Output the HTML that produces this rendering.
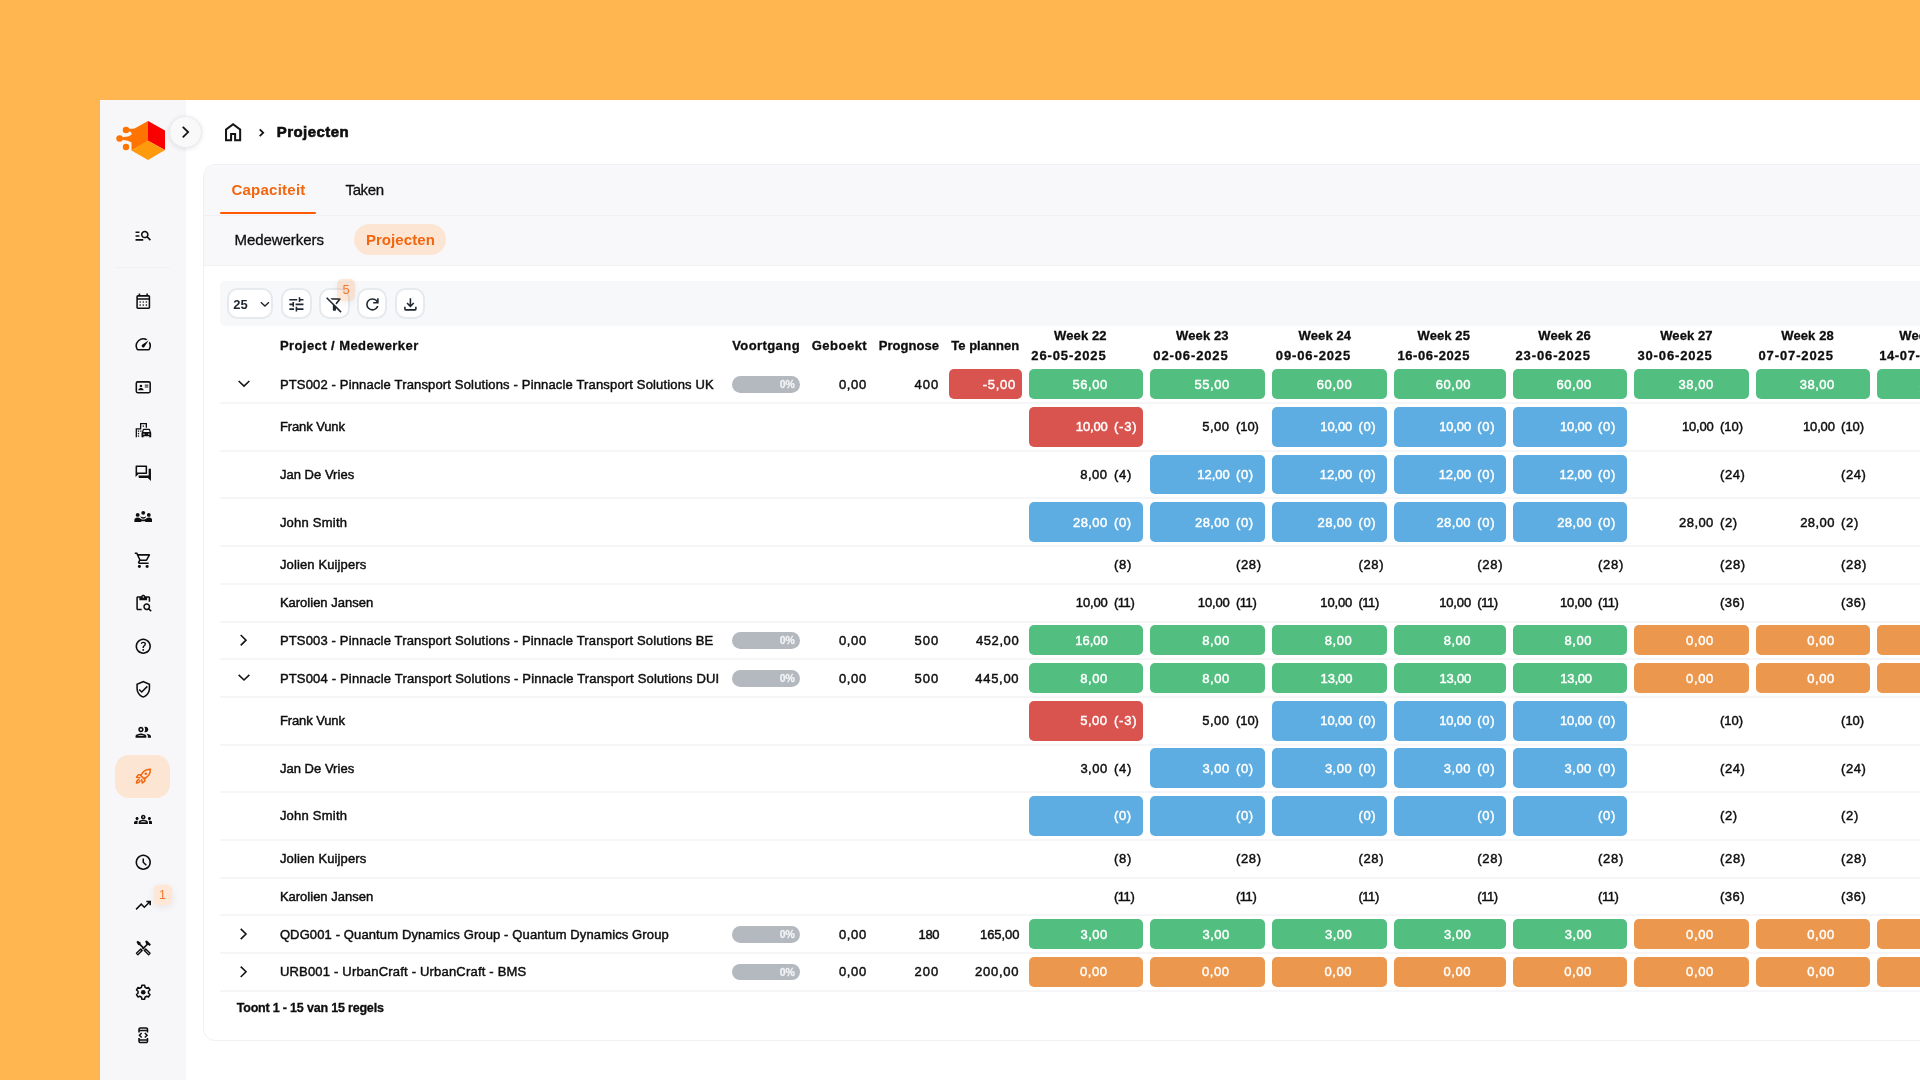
<!DOCTYPE html>
<html><head><meta charset="utf-8"><title>Projecten</title>
<style>
html,body{margin:0;padding:0;overflow:hidden}
body{width:1920px;height:1080px;overflow:hidden;background:#FFB550;position:relative;font-family:"Liberation Sans", sans-serif;}
#root{position:absolute;left:0;top:0;width:1920px;height:1080px;overflow:hidden;will-change:transform}
.b{position:absolute;display:block}
.t{position:absolute;white-space:pre;line-height:20px;height:20px;font-family:"Liberation Sans", sans-serif;-webkit-text-stroke:0.3px currentColor;}
</style></head><body>
<div id="root"><div class="b" style="left:100.00px;top:100.00px;width:1820.00px;height:980.00px;background:#FFFFFF;border-radius:0px;"></div>
<div class="b" style="left:100.00px;top:100.00px;width:86.00px;height:980.00px;background:#F7F7FA;border-radius:0px;"></div>
<div class="b" style="left:203px;top:163.5px;width:1760px;height:877px;background:#fff;border:1px solid #F0F1F3;border-radius:12px;box-sizing:border-box;overflow:hidden"><div style="position:absolute;left:0;top:0;width:100%;height:100.5px;background:#F8F8FA"></div><div style="position:absolute;left:0;top:50px;width:100%;height:1px;background:#F0F1F3"></div><div style="position:absolute;left:0;top:100.5px;width:100%;height:1px;background:#F1F2F4"></div></div>
<svg class="b" style="left:114px;top:119px" width="54" height="44" viewBox="114 119 54 44">
<polygon points="148,121 165,130.5 165,150 147.6,140.6" fill="#FB0000"/>
<path d="M148 121 L148 141 L131.5 150.5 L131.5 142.6 Q128 139.7 122.5 140 L122.5 137 Q128 137.4 131.5 134.8 L131.5 132.8 Q130.4 131.3 128.6 131.5 L128.8 128.5 Q131.5 129 134.6 128.4 Z" fill="#FF7300"/>
<polygon points="147.6,140.6 165,150 148,160 131.5,150.5" fill="#FF9A0C"/>
<circle cx="126" cy="130" r="3.25" fill="#FF7300"/><circle cx="119.6" cy="138.5" r="3.3" fill="#FF7300"/><circle cx="126" cy="147" r="3.2" fill="#FF7300"/>
</svg>
<div class="b" style="left:169px;top:115.8px;width:32.5px;height:32.5px;border-radius:50%;background:#F9F9F9;box-sizing:border-box;border:1px solid #ECECEC;box-shadow:0 1px 5px rgba(0,0,0,.10)"></div>
<svg class="b" style="left:0;top:0" width="1920" height="1080"><path d="M182.76 126.92L188.13 132.10L182.76 137.28" fill="none" stroke="#151515" stroke-width="1.8" stroke-linecap="butt" stroke-linejoin="miter"/></svg>
<svg class="b" style="left:220.80px;top:120.20px;" width="24.2" height="24.2" viewBox="0 0 24 24" fill="#151515" color="#151515" stroke="none"><path transform="translate(0,24) scale(0.025)" d="M240-200h120v-240h240v240h120v-360L480-740 240-560v360Zm-80 80v-480l320-240 320 240v480H520v-240h-80v240H160Zm320-350Z"/></svg>
<svg class="b" style="left:0;top:0" width="1920" height="1080"><path d="M259.71 129.42L263.18 132.80L259.71 136.18" fill="none" stroke="#151515" stroke-width="1.8" stroke-linecap="butt" stroke-linejoin="miter"/></svg>
<span class="t" style="left:276.70px;top:122px;font-size:15px;font-weight:700;color:#0E0E0E;letter-spacing:0.460px;-webkit-text-stroke-width:0.6px;">Projecten</span>
<span class="t" style="left:231.40px;top:180px;font-size:15px;font-weight:700;color:#F2660F;letter-spacing:0.250px;-webkit-text-stroke:0;">Capaciteit</span>
<span class="t" style="left:345.60px;top:180px;font-size:15px;font-weight:400;color:#0E0E0E;letter-spacing:-0.406px;-webkit-text-stroke-width:0.45px;-webkit-text-stroke-width:0.3px;">Taken</span>
<div class="b" style="left:220.00px;top:212.00px;width:96.20px;height:2.20px;background:#FF5A00;border-radius:1px;"></div>
<span class="t" style="left:234.50px;top:230px;font-size:15px;font-weight:400;color:#0E0E0E;letter-spacing:-0.057px;-webkit-text-stroke-width:0.45px;-webkit-text-stroke-width:0.3px;">Medewerkers</span>
<div class="b" style="left:354.40px;top:224.00px;width:91.40px;height:31.20px;background:#FDE5D4;border-radius:16px;"></div>
<span class="t" style="left:365.90px;top:230px;font-size:15px;font-weight:700;color:#F2660F;letter-spacing:0.071px;-webkit-text-stroke:0;">Projecten</span>
<div class="b" style="left:220.30px;top:281.40px;width:1739.70px;height:44.80px;background:#F7F8FA;border-radius:5px;"></div>
<div class="b" style="left:227.4px;top:288.3px;width:46.10000000000001px;height:31px;background:#fff;border:2px solid #E6E9ED;border-radius:10.5px;box-sizing:border-box"></div>
<div class="b" style="left:281.3px;top:288.3px;width:30.600000000000012px;height:31px;background:#fff;border:2px solid #E6E9ED;border-radius:10.5px;box-sizing:border-box"></div>
<div class="b" style="left:319.0px;top:288.3px;width:30.600000000000012px;height:31px;background:#fff;border:2px solid #E6E9ED;border-radius:10.5px;box-sizing:border-box"></div>
<div class="b" style="left:356.90000000000003px;top:288.3px;width:30.600000000000012px;height:31px;background:#fff;border:2px solid #E6E9ED;border-radius:10.5px;box-sizing:border-box"></div>
<div class="b" style="left:394.70000000000005px;top:288.3px;width:30.600000000000012px;height:31px;background:#fff;border:2px solid #E6E9ED;border-radius:10.5px;box-sizing:border-box"></div>
<span class="t" style="left:233.20px;top:295px;font-size:13px;font-weight:700;color:#1E2630;letter-spacing:0.166px;-webkit-text-stroke:0;">25</span>
<svg class="b" style="left:0;top:0" width="1920" height="1080"><path d="M260.86 302.23L264.90 305.93L268.94 302.23" fill="none" stroke="#1E2630" stroke-width="1.4" stroke-linecap="butt" stroke-linejoin="miter"/></svg>
<svg class="b" style="left:287.40px;top:294.70px;" width="18.8" height="18.8" viewBox="0 0 24 24" fill="#1E2630" color="#1E2630" stroke="none"><path transform="translate(0,24) scale(0.025)" d="M440-120v-240h80v80h320v80H520v80h-80Zm-320-80v-80h240v80H120Zm160-160v-80H120v-80h160v-80h80v240h-80Zm160-80v-80h400v80H440Zm160-160v-240h80v80h160v80H680v80h-80Zm-480-80v-80h400v80H120Z"/></svg>
<svg class="b" style="left:324.90px;top:294.90px;" width="18.8" height="18.8" viewBox="0 0 24 24" fill="#1E2630" color="#1E2630" stroke="none"><path transform="translate(0,24) scale(0.025)" d="m592-481-57-57 143-182H353l-80-80h487q25 0 36 22t-4 42L592-481ZM791-56 560-287v87q0 17-11.500 28.500T520-160h-80q-17 0-28.500-11.500T400-200v-247L56-791l56-57 736 736-57 56Z"/></svg>
<svg class="b" style="left:363.20px;top:294.50px;" width="18.8" height="18.8" viewBox="0 0 24 24" fill="#1E2630" color="#1E2630" stroke="none"><path transform="translate(0,24) scale(0.025)" d="M480-160q-134 0-227-93t-93-227q0-134 93-227t227-93q69 0 132 28.5T720-690v-110h80v280H520v-80h168q-32-56-87.5-88T480-720q-100 0-170 70t-70 170q0 100 70 170t170 70q77 0 139-44t87-116h84q-28 106-114 173t-196 67Z"/></svg>
<svg class="b" style="left:400.80px;top:294.70px;" width="18.8" height="18.8" viewBox="0 0 24 24" fill="#1E2630" color="#1E2630" stroke="none"><path transform="translate(0,24) scale(0.025)" d="M480-320 280-520l56-58 104 104v-326h80v326l104-104 56 58-200 200ZM240-160q-33 0-56.500-23.500T160-240v-120h80v120h480v-120h80v120q0 33-23.500 56.500T720-160H240Z"/></svg>
<div class="b" style="left:337.20px;top:279.00px;width:18.20px;height:21.50px;background:rgba(246,125,40,0.19);border-radius:5px;box-shadow:0 2px 6px rgba(0,0,0,.06)"></div>
<span class="t" style="left:342.58px;top:280px;font-size:13px;font-weight:400;color:#F07A30;-webkit-text-stroke-width:0.45px;-webkit-text-stroke:0;">5</span>
<span class="t" style="left:279.90px;top:336px;font-size:13px;font-weight:700;color:#0E0E0E;letter-spacing:0.437px;">Project / Medewerker</span>
<span class="t" style="left:732.20px;top:336px;font-size:13px;font-weight:700;color:#0E0E0E;letter-spacing:0.419px;">Voortgang</span>
<span class="t" style="left:811.70px;top:336px;font-size:13px;font-weight:700;color:#0E0E0E;letter-spacing:0.498px;">Geboekt</span>
<span class="t" style="left:878.70px;top:336px;font-size:13px;font-weight:700;color:#0E0E0E;letter-spacing:0.041px;">Prognose</span>
<span class="t" style="left:951.20px;top:336px;font-size:13px;font-weight:700;color:#0E0E0E;letter-spacing:0.044px;">Te plannen</span>
<span class="t" style="left:1054.10px;top:326px;font-size:13px;font-weight:700;color:#0E0E0E;letter-spacing:0.100px;">Week 22</span>
<span class="t" style="left:1031.30px;top:346px;font-size:13px;font-weight:700;color:#0E0E0E;letter-spacing:0.880px;">26-05-2025</span>
<span class="t" style="left:1176.10px;top:326px;font-size:13px;font-weight:700;color:#0E0E0E;letter-spacing:0.100px;">Week 23</span>
<span class="t" style="left:1153.30px;top:346px;font-size:13px;font-weight:700;color:#0E0E0E;letter-spacing:0.880px;">02-06-2025</span>
<span class="t" style="left:1298.60px;top:326px;font-size:13px;font-weight:700;color:#0E0E0E;letter-spacing:0.100px;">Week 24</span>
<span class="t" style="left:1275.80px;top:346px;font-size:13px;font-weight:700;color:#0E0E0E;letter-spacing:0.880px;">09-06-2025</span>
<span class="t" style="left:1417.50px;top:326px;font-size:13px;font-weight:700;color:#0E0E0E;letter-spacing:0.100px;">Week 25</span>
<span class="t" style="left:1397.40px;top:346px;font-size:13px;font-weight:700;color:#0E0E0E;letter-spacing:0.610px;">16-06-2025</span>
<span class="t" style="left:1538.30px;top:326px;font-size:13px;font-weight:700;color:#0E0E0E;letter-spacing:0.100px;">Week 26</span>
<span class="t" style="left:1515.50px;top:346px;font-size:13px;font-weight:700;color:#0E0E0E;letter-spacing:0.880px;">23-06-2025</span>
<span class="t" style="left:1660.20px;top:326px;font-size:13px;font-weight:700;color:#0E0E0E;letter-spacing:0.100px;">Week 27</span>
<span class="t" style="left:1637.40px;top:346px;font-size:13px;font-weight:700;color:#0E0E0E;letter-spacing:0.880px;">30-06-2025</span>
<span class="t" style="left:1781.30px;top:326px;font-size:13px;font-weight:700;color:#0E0E0E;letter-spacing:0.100px;">Week 28</span>
<span class="t" style="left:1758.50px;top:346px;font-size:13px;font-weight:700;color:#0E0E0E;letter-spacing:0.880px;">07-07-2025</span>
<span class="t" style="left:1899.30px;top:326px;font-size:13px;font-weight:700;color:#0E0E0E;letter-spacing:0.100px;">Week 29</span>
<span class="t" style="left:1879.20px;top:346px;font-size:13px;font-weight:700;color:#0E0E0E;letter-spacing:0.610px;">14-07-2025</span>
<svg class="b" style="left:0;top:0" width="1920" height="1080"><path d="M238.64 381.02L244.00 386.11L249.36 381.02" fill="none" stroke="#151515" stroke-width="1.6" stroke-linecap="butt" stroke-linejoin="miter"/></svg>
<span class="t" style="left:279.90px;top:375px;font-size:13px;font-weight:400;color:#0E0E0E;letter-spacing:0.159px;-webkit-text-stroke-width:0.45px;">PTS002 - Pinnacle Transport Solutions - Pinnacle Transport Solutions UK</span>
<div class="b" style="left:731.60px;top:375.90px;width:68.90px;height:16.80px;background:#B4B9C0;border-radius:9px;"></div>
<span class="t" style="left:779.80px;top:374px;font-size:10.5px;font-weight:700;color:#F1F2F4;letter-spacing:-0.094px;">0%</span>
<span class="t" style="left:839.00px;top:375px;font-size:13px;font-weight:400;color:#0E0E0E;letter-spacing:0.622px;-webkit-text-stroke-width:0.45px;">0,00</span>
<span class="t" style="left:914.60px;top:375px;font-size:13px;font-weight:400;color:#0E0E0E;letter-spacing:0.966px;-webkit-text-stroke-width:0.45px;">400</span>
<div class="b" style="left:948.90px;top:369.20px;width:73.10px;height:30.00px;background:#D9534F;border-radius:5px;"></div>
<span class="t" style="left:982.80px;top:375px;font-size:13px;font-weight:400;color:#fff;letter-spacing:0.672px;-webkit-text-stroke-width:0.45px;">-5,00</span>
<div class="b" style="left:1028.80px;top:369.20px;width:114.00px;height:30.00px;background:#52BE80;border-radius:5px;"></div>
<span class="t" style="left:1072.50px;top:375px;font-size:13px;font-weight:400;color:#fff;letter-spacing:0.531px;-webkit-text-stroke-width:0.45px;">56,00</span>
<div class="b" style="left:1149.70px;top:369.20px;width:115.10px;height:30.00px;background:#52BE80;border-radius:5px;"></div>
<span class="t" style="left:1194.50px;top:375px;font-size:13px;font-weight:400;color:#fff;letter-spacing:0.531px;-webkit-text-stroke-width:0.45px;">55,00</span>
<div class="b" style="left:1271.90px;top:369.20px;width:115.40px;height:30.00px;background:#52BE80;border-radius:5px;"></div>
<span class="t" style="left:1316.80px;top:375px;font-size:13px;font-weight:400;color:#fff;letter-spacing:0.571px;-webkit-text-stroke-width:0.45px;">60,00</span>
<div class="b" style="left:1394.30px;top:369.20px;width:111.90px;height:30.00px;background:#52BE80;border-radius:5px;"></div>
<span class="t" style="left:1435.70px;top:375px;font-size:13px;font-weight:400;color:#fff;letter-spacing:0.571px;-webkit-text-stroke-width:0.45px;">60,00</span>
<div class="b" style="left:1513.10px;top:369.20px;width:113.90px;height:30.00px;background:#52BE80;border-radius:5px;"></div>
<span class="t" style="left:1556.50px;top:375px;font-size:13px;font-weight:400;color:#fff;letter-spacing:0.571px;-webkit-text-stroke-width:0.45px;">60,00</span>
<div class="b" style="left:1634.00px;top:369.20px;width:114.90px;height:30.00px;background:#52BE80;border-radius:5px;"></div>
<span class="t" style="left:1678.60px;top:375px;font-size:13px;font-weight:400;color:#fff;letter-spacing:0.531px;-webkit-text-stroke-width:0.45px;">38,00</span>
<div class="b" style="left:1756.10px;top:369.20px;width:113.90px;height:30.00px;background:#52BE80;border-radius:5px;"></div>
<span class="t" style="left:1799.70px;top:375px;font-size:13px;font-weight:400;color:#fff;letter-spacing:0.531px;-webkit-text-stroke-width:0.45px;">38,00</span>
<div class="b" style="left:1876.90px;top:369.20px;width:111.10px;height:30.00px;background:#52BE80;border-radius:5px;"></div>
<span class="t" style="left:1919.50px;top:375px;font-size:13px;font-weight:400;color:#fff;letter-spacing:0.531px;-webkit-text-stroke-width:0.45px;">38,00</span>
<div class="b" style="left:220.00px;top:402.00px;width:1740.00px;height:2.00px;background:#F6F6F8;border-radius:0px;"></div>
<span class="t" style="left:279.90px;top:417px;font-size:13px;font-weight:400;color:#0E0E0E;letter-spacing:-0.100px;-webkit-text-stroke-width:0.45px;">Frank Vunk</span>
<div class="b" style="left:1028.80px;top:407.00px;width:114.00px;height:39.75px;background:#D9534F;border-radius:5px;"></div>
<span class="t" style="left:1075.80px;top:417px;font-size:13px;font-weight:400;color:#fff;letter-spacing:-0.149px;-webkit-text-stroke-width:0.45px;">10,00</span>
<span class="t" style="left:1113.90px;top:417px;font-size:13px;font-weight:400;color:#fff;letter-spacing:0.845px;-webkit-text-stroke-width:0.45px;">(-3)</span>
<span class="t" style="left:1202.20px;top:417px;font-size:13px;font-weight:400;color:#0E0E0E;letter-spacing:0.522px;-webkit-text-stroke-width:0.45px;">5,00</span>
<span class="t" style="left:1235.90px;top:417px;font-size:13px;font-weight:400;color:#0E0E0E;letter-spacing:-0.031px;-webkit-text-stroke-width:0.45px;">(10)</span>
<div class="b" style="left:1271.90px;top:407.00px;width:115.40px;height:39.75px;background:#5DADE2;border-radius:5px;"></div>
<span class="t" style="left:1320.30px;top:417px;font-size:13px;font-weight:400;color:#fff;letter-spacing:-0.149px;-webkit-text-stroke-width:0.45px;">10,00</span>
<span class="t" style="left:1358.40px;top:417px;font-size:13px;font-weight:400;color:#fff;letter-spacing:0.670px;-webkit-text-stroke-width:0.45px;">(0)</span>
<div class="b" style="left:1394.30px;top:407.00px;width:111.90px;height:39.75px;background:#5DADE2;border-radius:5px;"></div>
<span class="t" style="left:1439.20px;top:417px;font-size:13px;font-weight:400;color:#fff;letter-spacing:-0.149px;-webkit-text-stroke-width:0.45px;">10,00</span>
<span class="t" style="left:1477.30px;top:417px;font-size:13px;font-weight:400;color:#fff;letter-spacing:0.670px;-webkit-text-stroke-width:0.45px;">(0)</span>
<div class="b" style="left:1513.10px;top:407.00px;width:113.90px;height:39.75px;background:#5DADE2;border-radius:5px;"></div>
<span class="t" style="left:1560.00px;top:417px;font-size:13px;font-weight:400;color:#fff;letter-spacing:-0.149px;-webkit-text-stroke-width:0.45px;">10,00</span>
<span class="t" style="left:1598.10px;top:417px;font-size:13px;font-weight:400;color:#fff;letter-spacing:0.670px;-webkit-text-stroke-width:0.45px;">(0)</span>
<span class="t" style="left:1681.90px;top:417px;font-size:13px;font-weight:400;color:#0E0E0E;letter-spacing:-0.149px;-webkit-text-stroke-width:0.45px;">10,00</span>
<span class="t" style="left:1720.00px;top:417px;font-size:13px;font-weight:400;color:#0E0E0E;letter-spacing:-0.031px;-webkit-text-stroke-width:0.45px;">(10)</span>
<span class="t" style="left:1803.00px;top:417px;font-size:13px;font-weight:400;color:#0E0E0E;letter-spacing:-0.149px;-webkit-text-stroke-width:0.45px;">10,00</span>
<span class="t" style="left:1841.10px;top:417px;font-size:13px;font-weight:400;color:#0E0E0E;letter-spacing:-0.031px;-webkit-text-stroke-width:0.45px;">(10)</span>
<span class="t" style="left:1922.80px;top:417px;font-size:13px;font-weight:400;color:#0E0E0E;letter-spacing:-0.149px;-webkit-text-stroke-width:0.45px;">10,00</span>
<span class="t" style="left:1959.10px;top:417px;font-size:13px;font-weight:400;color:#0E0E0E;letter-spacing:-0.031px;-webkit-text-stroke-width:0.45px;">(10)</span>
<div class="b" style="left:220.00px;top:450.00px;width:1740.00px;height:2.00px;background:#F6F6F8;border-radius:0px;"></div>
<span class="t" style="left:279.90px;top:465px;font-size:13px;font-weight:400;color:#0E0E0E;letter-spacing:0.030px;-webkit-text-stroke-width:0.45px;">Jan De Vries</span>
<span class="t" style="left:1080.20px;top:465px;font-size:13px;font-weight:400;color:#0E0E0E;letter-spacing:0.522px;-webkit-text-stroke-width:0.45px;">8,00</span>
<span class="t" style="left:1113.90px;top:465px;font-size:13px;font-weight:400;color:#0E0E0E;letter-spacing:0.803px;-webkit-text-stroke-width:0.45px;">(4)</span>
<div class="b" style="left:1149.70px;top:454.55px;width:115.10px;height:39.75px;background:#5DADE2;border-radius:5px;"></div>
<span class="t" style="left:1197.30px;top:465px;font-size:13px;font-weight:400;color:#fff;letter-spacing:-0.049px;-webkit-text-stroke-width:0.45px;">12,00</span>
<span class="t" style="left:1235.90px;top:465px;font-size:13px;font-weight:400;color:#fff;letter-spacing:0.670px;-webkit-text-stroke-width:0.45px;">(0)</span>
<div class="b" style="left:1271.90px;top:454.55px;width:115.40px;height:39.75px;background:#5DADE2;border-radius:5px;"></div>
<span class="t" style="left:1319.80px;top:465px;font-size:13px;font-weight:400;color:#fff;letter-spacing:-0.049px;-webkit-text-stroke-width:0.45px;">12,00</span>
<span class="t" style="left:1358.40px;top:465px;font-size:13px;font-weight:400;color:#fff;letter-spacing:0.670px;-webkit-text-stroke-width:0.45px;">(0)</span>
<div class="b" style="left:1394.30px;top:454.55px;width:111.90px;height:39.75px;background:#5DADE2;border-radius:5px;"></div>
<span class="t" style="left:1438.70px;top:465px;font-size:13px;font-weight:400;color:#fff;letter-spacing:-0.049px;-webkit-text-stroke-width:0.45px;">12,00</span>
<span class="t" style="left:1477.30px;top:465px;font-size:13px;font-weight:400;color:#fff;letter-spacing:0.670px;-webkit-text-stroke-width:0.45px;">(0)</span>
<div class="b" style="left:1513.10px;top:454.55px;width:113.90px;height:39.75px;background:#5DADE2;border-radius:5px;"></div>
<span class="t" style="left:1559.50px;top:465px;font-size:13px;font-weight:400;color:#fff;letter-spacing:-0.049px;-webkit-text-stroke-width:0.45px;">12,00</span>
<span class="t" style="left:1598.10px;top:465px;font-size:13px;font-weight:400;color:#fff;letter-spacing:0.670px;-webkit-text-stroke-width:0.45px;">(0)</span>
<span class="t" style="left:1720.00px;top:465px;font-size:13px;font-weight:400;color:#0E0E0E;letter-spacing:0.569px;-webkit-text-stroke-width:0.45px;">(24)</span>
<span class="t" style="left:1841.10px;top:465px;font-size:13px;font-weight:400;color:#0E0E0E;letter-spacing:0.569px;-webkit-text-stroke-width:0.45px;">(24)</span>
<span class="t" style="left:1959.10px;top:465px;font-size:13px;font-weight:400;color:#0E0E0E;letter-spacing:0.569px;-webkit-text-stroke-width:0.45px;">(24)</span>
<div class="b" style="left:220.00px;top:497.00px;width:1740.00px;height:2.00px;background:#F6F6F8;border-radius:0px;"></div>
<span class="t" style="left:279.90px;top:513px;font-size:13px;font-weight:400;color:#0E0E0E;letter-spacing:0.225px;-webkit-text-stroke-width:0.45px;">John Smith</span>
<div class="b" style="left:1028.80px;top:502.10px;width:114.00px;height:39.75px;background:#5DADE2;border-radius:5px;"></div>
<span class="t" style="left:1073.00px;top:513px;font-size:13px;font-weight:400;color:#fff;letter-spacing:0.411px;-webkit-text-stroke-width:0.45px;">28,00</span>
<span class="t" style="left:1113.90px;top:513px;font-size:13px;font-weight:400;color:#fff;letter-spacing:0.670px;-webkit-text-stroke-width:0.45px;">(0)</span>
<div class="b" style="left:1149.70px;top:502.10px;width:115.10px;height:39.75px;background:#5DADE2;border-radius:5px;"></div>
<span class="t" style="left:1195.00px;top:513px;font-size:13px;font-weight:400;color:#fff;letter-spacing:0.411px;-webkit-text-stroke-width:0.45px;">28,00</span>
<span class="t" style="left:1235.90px;top:513px;font-size:13px;font-weight:400;color:#fff;letter-spacing:0.670px;-webkit-text-stroke-width:0.45px;">(0)</span>
<div class="b" style="left:1271.90px;top:502.10px;width:115.40px;height:39.75px;background:#5DADE2;border-radius:5px;"></div>
<span class="t" style="left:1317.50px;top:513px;font-size:13px;font-weight:400;color:#fff;letter-spacing:0.411px;-webkit-text-stroke-width:0.45px;">28,00</span>
<span class="t" style="left:1358.40px;top:513px;font-size:13px;font-weight:400;color:#fff;letter-spacing:0.670px;-webkit-text-stroke-width:0.45px;">(0)</span>
<div class="b" style="left:1394.30px;top:502.10px;width:111.90px;height:39.75px;background:#5DADE2;border-radius:5px;"></div>
<span class="t" style="left:1436.40px;top:513px;font-size:13px;font-weight:400;color:#fff;letter-spacing:0.411px;-webkit-text-stroke-width:0.45px;">28,00</span>
<span class="t" style="left:1477.30px;top:513px;font-size:13px;font-weight:400;color:#fff;letter-spacing:0.670px;-webkit-text-stroke-width:0.45px;">(0)</span>
<div class="b" style="left:1513.10px;top:502.10px;width:113.90px;height:39.75px;background:#5DADE2;border-radius:5px;"></div>
<span class="t" style="left:1557.20px;top:513px;font-size:13px;font-weight:400;color:#fff;letter-spacing:0.411px;-webkit-text-stroke-width:0.45px;">28,00</span>
<span class="t" style="left:1598.10px;top:513px;font-size:13px;font-weight:400;color:#fff;letter-spacing:0.670px;-webkit-text-stroke-width:0.45px;">(0)</span>
<span class="t" style="left:1679.10px;top:513px;font-size:13px;font-weight:400;color:#0E0E0E;letter-spacing:0.411px;-webkit-text-stroke-width:0.45px;">28,00</span>
<span class="t" style="left:1720.00px;top:513px;font-size:13px;font-weight:400;color:#0E0E0E;letter-spacing:0.636px;-webkit-text-stroke-width:0.45px;">(2)</span>
<span class="t" style="left:1800.20px;top:513px;font-size:13px;font-weight:400;color:#0E0E0E;letter-spacing:0.411px;-webkit-text-stroke-width:0.45px;">28,00</span>
<span class="t" style="left:1841.10px;top:513px;font-size:13px;font-weight:400;color:#0E0E0E;letter-spacing:0.636px;-webkit-text-stroke-width:0.45px;">(2)</span>
<span class="t" style="left:1920.00px;top:513px;font-size:13px;font-weight:400;color:#0E0E0E;letter-spacing:0.411px;-webkit-text-stroke-width:0.45px;">28,00</span>
<span class="t" style="left:1959.10px;top:513px;font-size:13px;font-weight:400;color:#0E0E0E;letter-spacing:0.636px;-webkit-text-stroke-width:0.45px;">(2)</span>
<div class="b" style="left:220.00px;top:545.00px;width:1740.00px;height:2.00px;background:#F6F6F8;border-radius:0px;"></div>
<span class="t" style="left:279.90px;top:555px;font-size:13px;font-weight:400;color:#0E0E0E;letter-spacing:0.130px;-webkit-text-stroke-width:0.45px;">Jolien Kuijpers</span>
<span class="t" style="left:1113.90px;top:555px;font-size:13px;font-weight:400;color:#0E0E0E;letter-spacing:0.803px;-webkit-text-stroke-width:0.45px;">(8)</span>
<span class="t" style="left:1235.90px;top:555px;font-size:13px;font-weight:400;color:#0E0E0E;letter-spacing:0.694px;-webkit-text-stroke-width:0.45px;">(28)</span>
<span class="t" style="left:1358.40px;top:555px;font-size:13px;font-weight:400;color:#0E0E0E;letter-spacing:0.694px;-webkit-text-stroke-width:0.45px;">(28)</span>
<span class="t" style="left:1477.30px;top:555px;font-size:13px;font-weight:400;color:#0E0E0E;letter-spacing:0.694px;-webkit-text-stroke-width:0.45px;">(28)</span>
<span class="t" style="left:1598.10px;top:555px;font-size:13px;font-weight:400;color:#0E0E0E;letter-spacing:0.694px;-webkit-text-stroke-width:0.45px;">(28)</span>
<span class="t" style="left:1720.00px;top:555px;font-size:13px;font-weight:400;color:#0E0E0E;letter-spacing:0.694px;-webkit-text-stroke-width:0.45px;">(28)</span>
<span class="t" style="left:1841.10px;top:555px;font-size:13px;font-weight:400;color:#0E0E0E;letter-spacing:0.694px;-webkit-text-stroke-width:0.45px;">(28)</span>
<span class="t" style="left:1959.10px;top:555px;font-size:13px;font-weight:400;color:#0E0E0E;letter-spacing:0.694px;-webkit-text-stroke-width:0.45px;">(28)</span>
<div class="b" style="left:220.00px;top:583.00px;width:1740.00px;height:2.00px;background:#F6F6F8;border-radius:0px;"></div>
<span class="t" style="left:279.90px;top:593px;font-size:13px;font-weight:400;color:#0E0E0E;-webkit-text-stroke-width:0.45px;">Karolien Jansen</span>
<span class="t" style="left:1075.80px;top:593px;font-size:13px;font-weight:400;color:#0E0E0E;letter-spacing:-0.149px;-webkit-text-stroke-width:0.45px;">10,00</span>
<span class="t" style="left:1113.90px;top:593px;font-size:13px;font-weight:400;color:#0E0E0E;letter-spacing:-0.439px;-webkit-text-stroke-width:0.45px;">(11)</span>
<span class="t" style="left:1197.80px;top:593px;font-size:13px;font-weight:400;color:#0E0E0E;letter-spacing:-0.149px;-webkit-text-stroke-width:0.45px;">10,00</span>
<span class="t" style="left:1235.90px;top:593px;font-size:13px;font-weight:400;color:#0E0E0E;letter-spacing:-0.439px;-webkit-text-stroke-width:0.45px;">(11)</span>
<span class="t" style="left:1320.30px;top:593px;font-size:13px;font-weight:400;color:#0E0E0E;letter-spacing:-0.149px;-webkit-text-stroke-width:0.45px;">10,00</span>
<span class="t" style="left:1358.40px;top:593px;font-size:13px;font-weight:400;color:#0E0E0E;letter-spacing:-0.439px;-webkit-text-stroke-width:0.45px;">(11)</span>
<span class="t" style="left:1439.20px;top:593px;font-size:13px;font-weight:400;color:#0E0E0E;letter-spacing:-0.149px;-webkit-text-stroke-width:0.45px;">10,00</span>
<span class="t" style="left:1477.30px;top:593px;font-size:13px;font-weight:400;color:#0E0E0E;letter-spacing:-0.439px;-webkit-text-stroke-width:0.45px;">(11)</span>
<span class="t" style="left:1560.00px;top:593px;font-size:13px;font-weight:400;color:#0E0E0E;letter-spacing:-0.149px;-webkit-text-stroke-width:0.45px;">10,00</span>
<span class="t" style="left:1598.10px;top:593px;font-size:13px;font-weight:400;color:#0E0E0E;letter-spacing:-0.439px;-webkit-text-stroke-width:0.45px;">(11)</span>
<span class="t" style="left:1720.00px;top:593px;font-size:13px;font-weight:400;color:#0E0E0E;letter-spacing:0.519px;-webkit-text-stroke-width:0.45px;">(36)</span>
<span class="t" style="left:1841.10px;top:593px;font-size:13px;font-weight:400;color:#0E0E0E;letter-spacing:0.519px;-webkit-text-stroke-width:0.45px;">(36)</span>
<span class="t" style="left:1959.10px;top:593px;font-size:13px;font-weight:400;color:#0E0E0E;letter-spacing:0.519px;-webkit-text-stroke-width:0.45px;">(36)</span>
<div class="b" style="left:220.00px;top:621.00px;width:1740.00px;height:2.00px;background:#F6F6F8;border-radius:0px;"></div>
<svg class="b" style="left:0;top:0" width="1920" height="1080"><path d="M240.72 634.99L246.01 640.15L240.72 645.31" fill="none" stroke="#151515" stroke-width="1.6" stroke-linecap="butt" stroke-linejoin="miter"/></svg>
<span class="t" style="left:279.90px;top:631px;font-size:13px;font-weight:400;color:#0E0E0E;letter-spacing:0.162px;-webkit-text-stroke-width:0.45px;">PTS003 - Pinnacle Transport Solutions - Pinnacle Transport Solutions BE</span>
<div class="b" style="left:731.60px;top:631.95px;width:68.90px;height:16.80px;background:#B4B9C0;border-radius:9px;"></div>
<span class="t" style="left:779.80px;top:630px;font-size:10.5px;font-weight:700;color:#F1F2F4;letter-spacing:-0.094px;">0%</span>
<span class="t" style="left:839.00px;top:631px;font-size:13px;font-weight:400;color:#0E0E0E;letter-spacing:0.622px;-webkit-text-stroke-width:0.45px;">0,00</span>
<span class="t" style="left:914.60px;top:631px;font-size:13px;font-weight:400;color:#0E0E0E;letter-spacing:0.966px;-webkit-text-stroke-width:0.45px;">500</span>
<span class="t" style="left:975.90px;top:631px;font-size:13px;font-weight:400;color:#0E0E0E;letter-spacing:0.606px;-webkit-text-stroke-width:0.45px;">452,00</span>
<div class="b" style="left:1028.80px;top:625.25px;width:114.00px;height:30.00px;background:#52BE80;border-radius:5px;"></div>
<span class="t" style="left:1075.30px;top:631px;font-size:13px;font-weight:400;color:#fff;letter-spacing:-0.029px;-webkit-text-stroke-width:0.45px;">16,00</span>
<div class="b" style="left:1149.70px;top:625.25px;width:115.10px;height:30.00px;background:#52BE80;border-radius:5px;"></div>
<span class="t" style="left:1202.30px;top:631px;font-size:13px;font-weight:400;color:#fff;letter-spacing:0.522px;-webkit-text-stroke-width:0.45px;">8,00</span>
<div class="b" style="left:1271.90px;top:625.25px;width:115.40px;height:30.00px;background:#52BE80;border-radius:5px;"></div>
<span class="t" style="left:1324.80px;top:631px;font-size:13px;font-weight:400;color:#fff;letter-spacing:0.522px;-webkit-text-stroke-width:0.45px;">8,00</span>
<div class="b" style="left:1394.30px;top:625.25px;width:111.90px;height:30.00px;background:#52BE80;border-radius:5px;"></div>
<span class="t" style="left:1443.70px;top:631px;font-size:13px;font-weight:400;color:#fff;letter-spacing:0.522px;-webkit-text-stroke-width:0.45px;">8,00</span>
<div class="b" style="left:1513.10px;top:625.25px;width:113.90px;height:30.00px;background:#52BE80;border-radius:5px;"></div>
<span class="t" style="left:1564.50px;top:631px;font-size:13px;font-weight:400;color:#fff;letter-spacing:0.522px;-webkit-text-stroke-width:0.45px;">8,00</span>
<div class="b" style="left:1634.00px;top:625.25px;width:114.90px;height:30.00px;background:#EB984E;border-radius:5px;"></div>
<span class="t" style="left:1686.10px;top:631px;font-size:13px;font-weight:400;color:#fff;letter-spacing:0.597px;-webkit-text-stroke-width:0.45px;">0,00</span>
<div class="b" style="left:1756.10px;top:625.25px;width:113.90px;height:30.00px;background:#EB984E;border-radius:5px;"></div>
<span class="t" style="left:1807.20px;top:631px;font-size:13px;font-weight:400;color:#fff;letter-spacing:0.597px;-webkit-text-stroke-width:0.45px;">0,00</span>
<div class="b" style="left:1876.90px;top:625.25px;width:111.10px;height:30.00px;background:#EB984E;border-radius:5px;"></div>
<span class="t" style="left:1927.00px;top:631px;font-size:13px;font-weight:400;color:#fff;letter-spacing:0.597px;-webkit-text-stroke-width:0.45px;">0,00</span>
<div class="b" style="left:220.00px;top:658.00px;width:1740.00px;height:2.00px;background:#F6F6F8;border-radius:0px;"></div>
<svg class="b" style="left:0;top:0" width="1920" height="1080"><path d="M238.64 674.87L244.00 679.96L249.36 674.87" fill="none" stroke="#151515" stroke-width="1.6" stroke-linecap="butt" stroke-linejoin="miter"/></svg>
<span class="t" style="left:279.90px;top:669px;font-size:13px;font-weight:400;color:#0E0E0E;letter-spacing:0.173px;-webkit-text-stroke-width:0.45px;">PTS004 - Pinnacle Transport Solutions - Pinnacle Transport Solutions DUI</span>
<div class="b" style="left:731.60px;top:669.75px;width:68.90px;height:16.80px;background:#B4B9C0;border-radius:9px;"></div>
<span class="t" style="left:779.80px;top:668px;font-size:10.5px;font-weight:700;color:#F1F2F4;letter-spacing:-0.094px;">0%</span>
<span class="t" style="left:839.00px;top:669px;font-size:13px;font-weight:400;color:#0E0E0E;letter-spacing:0.622px;-webkit-text-stroke-width:0.45px;">0,00</span>
<span class="t" style="left:914.60px;top:669px;font-size:13px;font-weight:400;color:#0E0E0E;letter-spacing:0.966px;-webkit-text-stroke-width:0.45px;">500</span>
<span class="t" style="left:975.30px;top:669px;font-size:13px;font-weight:400;color:#0E0E0E;letter-spacing:0.706px;-webkit-text-stroke-width:0.45px;">445,00</span>
<div class="b" style="left:1028.80px;top:663.05px;width:114.00px;height:30.00px;background:#52BE80;border-radius:5px;"></div>
<span class="t" style="left:1080.30px;top:669px;font-size:13px;font-weight:400;color:#fff;letter-spacing:0.522px;-webkit-text-stroke-width:0.45px;">8,00</span>
<div class="b" style="left:1149.70px;top:663.05px;width:115.10px;height:30.00px;background:#52BE80;border-radius:5px;"></div>
<span class="t" style="left:1202.30px;top:669px;font-size:13px;font-weight:400;color:#fff;letter-spacing:0.522px;-webkit-text-stroke-width:0.45px;">8,00</span>
<div class="b" style="left:1271.90px;top:663.05px;width:115.40px;height:30.00px;background:#52BE80;border-radius:5px;"></div>
<span class="t" style="left:1320.60px;top:669px;font-size:13px;font-weight:400;color:#fff;letter-spacing:-0.189px;-webkit-text-stroke-width:0.45px;">13,00</span>
<div class="b" style="left:1394.30px;top:663.05px;width:111.90px;height:30.00px;background:#52BE80;border-radius:5px;"></div>
<span class="t" style="left:1439.50px;top:669px;font-size:13px;font-weight:400;color:#fff;letter-spacing:-0.189px;-webkit-text-stroke-width:0.45px;">13,00</span>
<div class="b" style="left:1513.10px;top:663.05px;width:113.90px;height:30.00px;background:#52BE80;border-radius:5px;"></div>
<span class="t" style="left:1560.30px;top:669px;font-size:13px;font-weight:400;color:#fff;letter-spacing:-0.189px;-webkit-text-stroke-width:0.45px;">13,00</span>
<div class="b" style="left:1634.00px;top:663.05px;width:114.90px;height:30.00px;background:#EB984E;border-radius:5px;"></div>
<span class="t" style="left:1686.10px;top:669px;font-size:13px;font-weight:400;color:#fff;letter-spacing:0.597px;-webkit-text-stroke-width:0.45px;">0,00</span>
<div class="b" style="left:1756.10px;top:663.05px;width:113.90px;height:30.00px;background:#EB984E;border-radius:5px;"></div>
<span class="t" style="left:1807.20px;top:669px;font-size:13px;font-weight:400;color:#fff;letter-spacing:0.597px;-webkit-text-stroke-width:0.45px;">0,00</span>
<div class="b" style="left:1876.90px;top:663.05px;width:111.10px;height:30.00px;background:#EB984E;border-radius:5px;"></div>
<span class="t" style="left:1927.00px;top:669px;font-size:13px;font-weight:400;color:#fff;letter-spacing:0.597px;-webkit-text-stroke-width:0.45px;">0,00</span>
<div class="b" style="left:220.00px;top:696.00px;width:1740.00px;height:2.00px;background:#F6F6F8;border-radius:0px;"></div>
<span class="t" style="left:279.90px;top:711px;font-size:13px;font-weight:400;color:#0E0E0E;letter-spacing:-0.100px;-webkit-text-stroke-width:0.45px;">Frank Vunk</span>
<div class="b" style="left:1028.80px;top:700.85px;width:114.00px;height:39.75px;background:#D9534F;border-radius:5px;"></div>
<span class="t" style="left:1080.20px;top:711px;font-size:13px;font-weight:400;color:#fff;letter-spacing:0.522px;-webkit-text-stroke-width:0.45px;">5,00</span>
<span class="t" style="left:1113.90px;top:711px;font-size:13px;font-weight:400;color:#fff;letter-spacing:0.845px;-webkit-text-stroke-width:0.45px;">(-3)</span>
<span class="t" style="left:1202.20px;top:711px;font-size:13px;font-weight:400;color:#0E0E0E;letter-spacing:0.522px;-webkit-text-stroke-width:0.45px;">5,00</span>
<span class="t" style="left:1235.90px;top:711px;font-size:13px;font-weight:400;color:#0E0E0E;letter-spacing:-0.031px;-webkit-text-stroke-width:0.45px;">(10)</span>
<div class="b" style="left:1271.90px;top:700.85px;width:115.40px;height:39.75px;background:#5DADE2;border-radius:5px;"></div>
<span class="t" style="left:1320.30px;top:711px;font-size:13px;font-weight:400;color:#fff;letter-spacing:-0.149px;-webkit-text-stroke-width:0.45px;">10,00</span>
<span class="t" style="left:1358.40px;top:711px;font-size:13px;font-weight:400;color:#fff;letter-spacing:0.670px;-webkit-text-stroke-width:0.45px;">(0)</span>
<div class="b" style="left:1394.30px;top:700.85px;width:111.90px;height:39.75px;background:#5DADE2;border-radius:5px;"></div>
<span class="t" style="left:1439.20px;top:711px;font-size:13px;font-weight:400;color:#fff;letter-spacing:-0.149px;-webkit-text-stroke-width:0.45px;">10,00</span>
<span class="t" style="left:1477.30px;top:711px;font-size:13px;font-weight:400;color:#fff;letter-spacing:0.670px;-webkit-text-stroke-width:0.45px;">(0)</span>
<div class="b" style="left:1513.10px;top:700.85px;width:113.90px;height:39.75px;background:#5DADE2;border-radius:5px;"></div>
<span class="t" style="left:1560.00px;top:711px;font-size:13px;font-weight:400;color:#fff;letter-spacing:-0.149px;-webkit-text-stroke-width:0.45px;">10,00</span>
<span class="t" style="left:1598.10px;top:711px;font-size:13px;font-weight:400;color:#fff;letter-spacing:0.670px;-webkit-text-stroke-width:0.45px;">(0)</span>
<span class="t" style="left:1720.00px;top:711px;font-size:13px;font-weight:400;color:#0E0E0E;letter-spacing:-0.031px;-webkit-text-stroke-width:0.45px;">(10)</span>
<span class="t" style="left:1841.10px;top:711px;font-size:13px;font-weight:400;color:#0E0E0E;letter-spacing:-0.031px;-webkit-text-stroke-width:0.45px;">(10)</span>
<span class="t" style="left:1959.10px;top:711px;font-size:13px;font-weight:400;color:#0E0E0E;letter-spacing:-0.031px;-webkit-text-stroke-width:0.45px;">(10)</span>
<div class="b" style="left:220.00px;top:744.00px;width:1740.00px;height:2.00px;background:#F6F6F8;border-radius:0px;"></div>
<span class="t" style="left:279.90px;top:759px;font-size:13px;font-weight:400;color:#0E0E0E;letter-spacing:0.030px;-webkit-text-stroke-width:0.45px;">Jan De Vries</span>
<span class="t" style="left:1080.40px;top:759px;font-size:13px;font-weight:400;color:#0E0E0E;letter-spacing:0.472px;-webkit-text-stroke-width:0.45px;">3,00</span>
<span class="t" style="left:1113.90px;top:759px;font-size:13px;font-weight:400;color:#0E0E0E;letter-spacing:0.803px;-webkit-text-stroke-width:0.45px;">(4)</span>
<div class="b" style="left:1149.70px;top:748.40px;width:115.10px;height:39.75px;background:#5DADE2;border-radius:5px;"></div>
<span class="t" style="left:1202.40px;top:759px;font-size:13px;font-weight:400;color:#fff;letter-spacing:0.472px;-webkit-text-stroke-width:0.45px;">3,00</span>
<span class="t" style="left:1235.90px;top:759px;font-size:13px;font-weight:400;color:#fff;letter-spacing:0.670px;-webkit-text-stroke-width:0.45px;">(0)</span>
<div class="b" style="left:1271.90px;top:748.40px;width:115.40px;height:39.75px;background:#5DADE2;border-radius:5px;"></div>
<span class="t" style="left:1324.90px;top:759px;font-size:13px;font-weight:400;color:#fff;letter-spacing:0.472px;-webkit-text-stroke-width:0.45px;">3,00</span>
<span class="t" style="left:1358.40px;top:759px;font-size:13px;font-weight:400;color:#fff;letter-spacing:0.670px;-webkit-text-stroke-width:0.45px;">(0)</span>
<div class="b" style="left:1394.30px;top:748.40px;width:111.90px;height:39.75px;background:#5DADE2;border-radius:5px;"></div>
<span class="t" style="left:1443.80px;top:759px;font-size:13px;font-weight:400;color:#fff;letter-spacing:0.472px;-webkit-text-stroke-width:0.45px;">3,00</span>
<span class="t" style="left:1477.30px;top:759px;font-size:13px;font-weight:400;color:#fff;letter-spacing:0.670px;-webkit-text-stroke-width:0.45px;">(0)</span>
<div class="b" style="left:1513.10px;top:748.40px;width:113.90px;height:39.75px;background:#5DADE2;border-radius:5px;"></div>
<span class="t" style="left:1564.60px;top:759px;font-size:13px;font-weight:400;color:#fff;letter-spacing:0.472px;-webkit-text-stroke-width:0.45px;">3,00</span>
<span class="t" style="left:1598.10px;top:759px;font-size:13px;font-weight:400;color:#fff;letter-spacing:0.670px;-webkit-text-stroke-width:0.45px;">(0)</span>
<span class="t" style="left:1720.00px;top:759px;font-size:13px;font-weight:400;color:#0E0E0E;letter-spacing:0.569px;-webkit-text-stroke-width:0.45px;">(24)</span>
<span class="t" style="left:1841.10px;top:759px;font-size:13px;font-weight:400;color:#0E0E0E;letter-spacing:0.569px;-webkit-text-stroke-width:0.45px;">(24)</span>
<span class="t" style="left:1959.10px;top:759px;font-size:13px;font-weight:400;color:#0E0E0E;letter-spacing:0.569px;-webkit-text-stroke-width:0.45px;">(24)</span>
<div class="b" style="left:220.00px;top:791.00px;width:1740.00px;height:2.00px;background:#F6F6F8;border-radius:0px;"></div>
<span class="t" style="left:279.90px;top:806px;font-size:13px;font-weight:400;color:#0E0E0E;letter-spacing:0.225px;-webkit-text-stroke-width:0.45px;">John Smith</span>
<div class="b" style="left:1028.80px;top:795.95px;width:114.00px;height:39.75px;background:#5DADE2;border-radius:5px;"></div>
<span class="t" style="left:1113.90px;top:806px;font-size:13px;font-weight:400;color:#fff;letter-spacing:0.670px;-webkit-text-stroke-width:0.45px;">(0)</span>
<div class="b" style="left:1149.70px;top:795.95px;width:115.10px;height:39.75px;background:#5DADE2;border-radius:5px;"></div>
<span class="t" style="left:1235.90px;top:806px;font-size:13px;font-weight:400;color:#fff;letter-spacing:0.670px;-webkit-text-stroke-width:0.45px;">(0)</span>
<div class="b" style="left:1271.90px;top:795.95px;width:115.40px;height:39.75px;background:#5DADE2;border-radius:5px;"></div>
<span class="t" style="left:1358.40px;top:806px;font-size:13px;font-weight:400;color:#fff;letter-spacing:0.670px;-webkit-text-stroke-width:0.45px;">(0)</span>
<div class="b" style="left:1394.30px;top:795.95px;width:111.90px;height:39.75px;background:#5DADE2;border-radius:5px;"></div>
<span class="t" style="left:1477.30px;top:806px;font-size:13px;font-weight:400;color:#fff;letter-spacing:0.670px;-webkit-text-stroke-width:0.45px;">(0)</span>
<div class="b" style="left:1513.10px;top:795.95px;width:113.90px;height:39.75px;background:#5DADE2;border-radius:5px;"></div>
<span class="t" style="left:1598.10px;top:806px;font-size:13px;font-weight:400;color:#fff;letter-spacing:0.670px;-webkit-text-stroke-width:0.45px;">(0)</span>
<span class="t" style="left:1720.00px;top:806px;font-size:13px;font-weight:400;color:#0E0E0E;letter-spacing:0.636px;-webkit-text-stroke-width:0.45px;">(2)</span>
<span class="t" style="left:1841.10px;top:806px;font-size:13px;font-weight:400;color:#0E0E0E;letter-spacing:0.636px;-webkit-text-stroke-width:0.45px;">(2)</span>
<span class="t" style="left:1959.10px;top:806px;font-size:13px;font-weight:400;color:#0E0E0E;letter-spacing:0.636px;-webkit-text-stroke-width:0.45px;">(2)</span>
<div class="b" style="left:220.00px;top:839.00px;width:1740.00px;height:2.00px;background:#F6F6F8;border-radius:0px;"></div>
<span class="t" style="left:279.90px;top:849px;font-size:13px;font-weight:400;color:#0E0E0E;letter-spacing:0.130px;-webkit-text-stroke-width:0.45px;">Jolien Kuijpers</span>
<span class="t" style="left:1113.90px;top:849px;font-size:13px;font-weight:400;color:#0E0E0E;letter-spacing:0.803px;-webkit-text-stroke-width:0.45px;">(8)</span>
<span class="t" style="left:1235.90px;top:849px;font-size:13px;font-weight:400;color:#0E0E0E;letter-spacing:0.694px;-webkit-text-stroke-width:0.45px;">(28)</span>
<span class="t" style="left:1358.40px;top:849px;font-size:13px;font-weight:400;color:#0E0E0E;letter-spacing:0.694px;-webkit-text-stroke-width:0.45px;">(28)</span>
<span class="t" style="left:1477.30px;top:849px;font-size:13px;font-weight:400;color:#0E0E0E;letter-spacing:0.694px;-webkit-text-stroke-width:0.45px;">(28)</span>
<span class="t" style="left:1598.10px;top:849px;font-size:13px;font-weight:400;color:#0E0E0E;letter-spacing:0.694px;-webkit-text-stroke-width:0.45px;">(28)</span>
<span class="t" style="left:1720.00px;top:849px;font-size:13px;font-weight:400;color:#0E0E0E;letter-spacing:0.694px;-webkit-text-stroke-width:0.45px;">(28)</span>
<span class="t" style="left:1841.10px;top:849px;font-size:13px;font-weight:400;color:#0E0E0E;letter-spacing:0.694px;-webkit-text-stroke-width:0.45px;">(28)</span>
<span class="t" style="left:1959.10px;top:849px;font-size:13px;font-weight:400;color:#0E0E0E;letter-spacing:0.694px;-webkit-text-stroke-width:0.45px;">(28)</span>
<div class="b" style="left:220.00px;top:877.00px;width:1740.00px;height:2.00px;background:#F6F6F8;border-radius:0px;"></div>
<span class="t" style="left:279.90px;top:887px;font-size:13px;font-weight:400;color:#0E0E0E;-webkit-text-stroke-width:0.45px;">Karolien Jansen</span>
<span class="t" style="left:1113.90px;top:887px;font-size:13px;font-weight:400;color:#0E0E0E;letter-spacing:-0.439px;-webkit-text-stroke-width:0.45px;">(11)</span>
<span class="t" style="left:1235.90px;top:887px;font-size:13px;font-weight:400;color:#0E0E0E;letter-spacing:-0.439px;-webkit-text-stroke-width:0.45px;">(11)</span>
<span class="t" style="left:1358.40px;top:887px;font-size:13px;font-weight:400;color:#0E0E0E;letter-spacing:-0.439px;-webkit-text-stroke-width:0.45px;">(11)</span>
<span class="t" style="left:1477.30px;top:887px;font-size:13px;font-weight:400;color:#0E0E0E;letter-spacing:-0.439px;-webkit-text-stroke-width:0.45px;">(11)</span>
<span class="t" style="left:1598.10px;top:887px;font-size:13px;font-weight:400;color:#0E0E0E;letter-spacing:-0.439px;-webkit-text-stroke-width:0.45px;">(11)</span>
<span class="t" style="left:1720.00px;top:887px;font-size:13px;font-weight:400;color:#0E0E0E;letter-spacing:0.519px;-webkit-text-stroke-width:0.45px;">(36)</span>
<span class="t" style="left:1841.10px;top:887px;font-size:13px;font-weight:400;color:#0E0E0E;letter-spacing:0.519px;-webkit-text-stroke-width:0.45px;">(36)</span>
<span class="t" style="left:1959.10px;top:887px;font-size:13px;font-weight:400;color:#0E0E0E;letter-spacing:0.519px;-webkit-text-stroke-width:0.45px;">(36)</span>
<div class="b" style="left:220.00px;top:914.00px;width:1740.00px;height:2.00px;background:#F6F6F8;border-radius:0px;"></div>
<svg class="b" style="left:0;top:0" width="1920" height="1080"><path d="M240.72 928.84L246.01 934.00L240.72 939.16" fill="none" stroke="#151515" stroke-width="1.6" stroke-linecap="butt" stroke-linejoin="miter"/></svg>
<span class="t" style="left:279.90px;top:925px;font-size:13px;font-weight:400;color:#0E0E0E;letter-spacing:0.121px;-webkit-text-stroke-width:0.45px;">QDG001 - Quantum Dynamics Group - Quantum Dynamics Group</span>
<div class="b" style="left:731.60px;top:925.80px;width:68.90px;height:16.80px;background:#B4B9C0;border-radius:9px;"></div>
<span class="t" style="left:779.80px;top:924px;font-size:10.5px;font-weight:700;color:#F1F2F4;letter-spacing:-0.094px;">0%</span>
<span class="t" style="left:839.00px;top:925px;font-size:13px;font-weight:400;color:#0E0E0E;letter-spacing:0.622px;-webkit-text-stroke-width:0.45px;">0,00</span>
<span class="t" style="left:918.60px;top:925px;font-size:13px;font-weight:400;color:#0E0E0E;letter-spacing:-0.368px;-webkit-text-stroke-width:0.45px;">180</span>
<span class="t" style="left:980.00px;top:925px;font-size:13px;font-weight:400;color:#0E0E0E;letter-spacing:-0.078px;-webkit-text-stroke-width:0.45px;">165,00</span>
<div class="b" style="left:1028.80px;top:919.10px;width:114.00px;height:30.00px;background:#52BE80;border-radius:5px;"></div>
<span class="t" style="left:1080.50px;top:925px;font-size:13px;font-weight:400;color:#fff;letter-spacing:0.472px;-webkit-text-stroke-width:0.45px;">3,00</span>
<div class="b" style="left:1149.70px;top:919.10px;width:115.10px;height:30.00px;background:#52BE80;border-radius:5px;"></div>
<span class="t" style="left:1202.50px;top:925px;font-size:13px;font-weight:400;color:#fff;letter-spacing:0.472px;-webkit-text-stroke-width:0.45px;">3,00</span>
<div class="b" style="left:1271.90px;top:919.10px;width:115.40px;height:30.00px;background:#52BE80;border-radius:5px;"></div>
<span class="t" style="left:1325.00px;top:925px;font-size:13px;font-weight:400;color:#fff;letter-spacing:0.472px;-webkit-text-stroke-width:0.45px;">3,00</span>
<div class="b" style="left:1394.30px;top:919.10px;width:111.90px;height:30.00px;background:#52BE80;border-radius:5px;"></div>
<span class="t" style="left:1443.90px;top:925px;font-size:13px;font-weight:400;color:#fff;letter-spacing:0.472px;-webkit-text-stroke-width:0.45px;">3,00</span>
<div class="b" style="left:1513.10px;top:919.10px;width:113.90px;height:30.00px;background:#52BE80;border-radius:5px;"></div>
<span class="t" style="left:1564.70px;top:925px;font-size:13px;font-weight:400;color:#fff;letter-spacing:0.472px;-webkit-text-stroke-width:0.45px;">3,00</span>
<div class="b" style="left:1634.00px;top:919.10px;width:114.90px;height:30.00px;background:#EB984E;border-radius:5px;"></div>
<span class="t" style="left:1686.10px;top:925px;font-size:13px;font-weight:400;color:#fff;letter-spacing:0.597px;-webkit-text-stroke-width:0.45px;">0,00</span>
<div class="b" style="left:1756.10px;top:919.10px;width:113.90px;height:30.00px;background:#EB984E;border-radius:5px;"></div>
<span class="t" style="left:1807.20px;top:925px;font-size:13px;font-weight:400;color:#fff;letter-spacing:0.597px;-webkit-text-stroke-width:0.45px;">0,00</span>
<div class="b" style="left:1876.90px;top:919.10px;width:111.10px;height:30.00px;background:#EB984E;border-radius:5px;"></div>
<span class="t" style="left:1927.00px;top:925px;font-size:13px;font-weight:400;color:#fff;letter-spacing:0.597px;-webkit-text-stroke-width:0.45px;">0,00</span>
<div class="b" style="left:220.00px;top:952.00px;width:1740.00px;height:2.00px;background:#F6F6F8;border-radius:0px;"></div>
<svg class="b" style="left:0;top:0" width="1920" height="1080"><path d="M240.72 966.64L246.01 971.80L240.72 976.96" fill="none" stroke="#151515" stroke-width="1.6" stroke-linecap="butt" stroke-linejoin="miter"/></svg>
<span class="t" style="left:279.90px;top:962px;font-size:13px;font-weight:400;color:#0E0E0E;letter-spacing:0.194px;-webkit-text-stroke-width:0.45px;">URB001 - UrbanCraft - UrbanCraft - BMS</span>
<div class="b" style="left:731.60px;top:963.60px;width:68.90px;height:16.80px;background:#B4B9C0;border-radius:9px;"></div>
<span class="t" style="left:779.80px;top:962px;font-size:10.5px;font-weight:700;color:#F1F2F4;letter-spacing:-0.094px;">0%</span>
<span class="t" style="left:839.00px;top:962px;font-size:13px;font-weight:400;color:#0E0E0E;letter-spacing:0.622px;-webkit-text-stroke-width:0.45px;">0,00</span>
<span class="t" style="left:914.60px;top:962px;font-size:13px;font-weight:400;color:#0E0E0E;letter-spacing:0.966px;-webkit-text-stroke-width:0.45px;">200</span>
<span class="t" style="left:975.00px;top:962px;font-size:13px;font-weight:400;color:#0E0E0E;letter-spacing:0.756px;-webkit-text-stroke-width:0.45px;">200,00</span>
<div class="b" style="left:1028.80px;top:956.90px;width:114.00px;height:30.00px;background:#EB984E;border-radius:5px;"></div>
<span class="t" style="left:1080.00px;top:962px;font-size:13px;font-weight:400;color:#fff;letter-spacing:0.597px;-webkit-text-stroke-width:0.45px;">0,00</span>
<div class="b" style="left:1149.70px;top:956.90px;width:115.10px;height:30.00px;background:#EB984E;border-radius:5px;"></div>
<span class="t" style="left:1202.00px;top:962px;font-size:13px;font-weight:400;color:#fff;letter-spacing:0.597px;-webkit-text-stroke-width:0.45px;">0,00</span>
<div class="b" style="left:1271.90px;top:956.90px;width:115.40px;height:30.00px;background:#EB984E;border-radius:5px;"></div>
<span class="t" style="left:1324.50px;top:962px;font-size:13px;font-weight:400;color:#fff;letter-spacing:0.597px;-webkit-text-stroke-width:0.45px;">0,00</span>
<div class="b" style="left:1394.30px;top:956.90px;width:111.90px;height:30.00px;background:#EB984E;border-radius:5px;"></div>
<span class="t" style="left:1443.40px;top:962px;font-size:13px;font-weight:400;color:#fff;letter-spacing:0.597px;-webkit-text-stroke-width:0.45px;">0,00</span>
<div class="b" style="left:1513.10px;top:956.90px;width:113.90px;height:30.00px;background:#EB984E;border-radius:5px;"></div>
<span class="t" style="left:1564.20px;top:962px;font-size:13px;font-weight:400;color:#fff;letter-spacing:0.597px;-webkit-text-stroke-width:0.45px;">0,00</span>
<div class="b" style="left:1634.00px;top:956.90px;width:114.90px;height:30.00px;background:#EB984E;border-radius:5px;"></div>
<span class="t" style="left:1686.10px;top:962px;font-size:13px;font-weight:400;color:#fff;letter-spacing:0.597px;-webkit-text-stroke-width:0.45px;">0,00</span>
<div class="b" style="left:1756.10px;top:956.90px;width:113.90px;height:30.00px;background:#EB984E;border-radius:5px;"></div>
<span class="t" style="left:1807.20px;top:962px;font-size:13px;font-weight:400;color:#fff;letter-spacing:0.597px;-webkit-text-stroke-width:0.45px;">0,00</span>
<div class="b" style="left:1876.90px;top:956.90px;width:111.10px;height:30.00px;background:#EB984E;border-radius:5px;"></div>
<span class="t" style="left:1927.00px;top:962px;font-size:13px;font-weight:400;color:#fff;letter-spacing:0.597px;-webkit-text-stroke-width:0.45px;">0,00</span>
<div class="b" style="left:220.00px;top:990.00px;width:1740.00px;height:2.00px;background:#F6F6F8;border-radius:0px;"></div>
<span class="t" style="left:236.70px;top:998px;font-size:12.5px;font-weight:700;color:#0E0E0E;letter-spacing:-0.189px;">Toont 1 - 15 van 15 regels</span>
<div class="b" style="left:115.00px;top:266.50px;width:55.00px;height:1.00px;background:#F1F1F4;border-radius:0px;"></div>
<div class="b" style="left:115.00px;top:755.00px;width:54.50px;height:42.50px;background:#FDE5D3;border-radius:14px;"></div>
<svg class="b" style="left:133.75px;top:225.75px;" width="18.5" height="18.5" viewBox="0 0 24 24" fill="#0E0E0E" color="#0E0E0E" stroke="none"><path d="M7 9H2V7h5v2zm0 3H2v2h5v-2zm13.59 7-3.83-3.83c-.8.52-1.74.83-2.76.83-2.76 0-5-2.24-5-5s2.24-5 5-5 5 2.24 5 5c0 1.02-.31 1.96-.83 2.75L22 17.590 20.590 19zM17 11c0-1.650-1.350-3-3-3s-3 1.350-3 3 1.350 3 3 3 3-1.350 3-3zM2 19h10v-2H2v2z"/></svg>
<svg class="b" style="left:133.75px;top:291.75px;" width="18.5" height="18.5" viewBox="0 0 24 24" fill="#0E0E0E" color="#0E0E0E" stroke="none"><path transform="translate(0,24) scale(0.025)" d="M200-80q-33 0-56.500-23.500T120-160v-560q0-33 23.500-56.500T200-800h40v-80h80v80h320v-80h80v80h40q33 0 56.500 23.500T840-720v560q0 33-23.500 56.500T760-80H200Zm0-80h560v-400H200v400Zm0-480h560v-80H200v80Z"/><g><circle cx="8" cy="13" r="1"/><circle cx="12" cy="13" r="1"/><circle cx="16" cy="13" r="1"/><circle cx="8" cy="17" r="1"/><circle cx="12" cy="17" r="1"/><circle cx="16" cy="17" r="1"/></g></svg>
<svg class="b" style="left:133.75px;top:334.75px;" width="18.5" height="18.5" viewBox="0 0 24 24" fill="#0E0E0E" color="#0E0E0E" stroke="none"><path d="M20.38 8.57l-1.23 1.85a8 8 0 0 1-.22 7.58H5.07A8 8 0 0 1 15.58 6.85l1.85-1.23A10 10 0 0 0 3.35 19a2 2 0 0 0 1.720 1h13.850a2 2 0 0 0 1.740-1 10 10 0 0 0-.270-10.440zm-9.790 6.840a2 2 0 0 0 2.830 0l5.660-8.490-8.490 5.660a2 2 0 0 0 0 2.830z"/></svg>
<svg class="b" style="left:133.75px;top:378.25px;" width="18.5" height="18.5" viewBox="0 0 24 24" fill="#0E0E0E" color="#0E0E0E" stroke="none"><rect x="3" y="5" width="18" height="14" rx="1.8" fill="none" stroke="currentColor" stroke-width="2"/><circle cx="9" cy="10.300" r="1.700"/><path d="M5.600 15.600c0-1.800 2.200-2.600 3.400-2.600s3.400.8 3.400 2.600v.4H5.600z"/><rect x="14" y="8.600" width="4.600" height="1.300"/><rect x="14" y="11" width="4.600" height="1.300"/></svg>
<svg class="b" style="left:133.75px;top:421.25px;" width="18.5" height="18.5" viewBox="0 0 24 24" fill="#0E0E0E" color="#0E0E0E" stroke="none"><path d="M3 21V10.200h5.600V3.300h7.400v5.400" fill="none" stroke="currentColor" stroke-width="1.7" /><rect x="11.200" y="5.800" width="1.700" height="1.700"/><rect x="5" y="12.300" width="1.700" height="1.700"/><rect x="5" y="15.500" width="1.700" height="1.700"/><rect x="5" y="18.700" width="1.700" height="1.700"/><rect x="8.200" y="12.300" width="1.500" height="1.700"/><g fill="none" stroke="currentColor" stroke-width="1.600" stroke-linejoin="round"><path d="M10.800 20.800v-5.600l1.500-4.300h7.600l1.500 4.300v5.600"/><path d="M10.800 15.200h10.600M10.800 19h10.600"/></g><rect x="10" y="15.200" width="12.200" height="3.800"/><circle cx="12.900" cy="17.100" r="0.900" fill="#F7F7FA"/><circle cx="19.300" cy="17.100" r="0.900" fill="#F7F7FA"/><rect x="10" y="19" width="2.400" height="2.200"/><rect x="19.800" y="19" width="2.400" height="2.200"/></svg>
<svg class="b" style="left:133.75px;top:464.25px;" width="18.5" height="18.5" viewBox="0 0 24 24" fill="#0E0E0E" color="#0E0E0E" stroke="none"><path transform="translate(0,24) scale(0.025)" d="M280-240q-17 0-28.500-11.500T240-280v-80h520v-360h80q17 0 28.500 11.500T880-680v600L720-240H280ZM80-280v-560q0-17 11.500-28.500T120-880h520q17 0 28.500 11.500T680-840v360q0 17-11.500 28.500T640-440H240L80-280Zm520-240v-280H160v280h440Z"/></svg>
<svg class="b" style="left:133.75px;top:507.75px;" width="18.5" height="18.5" viewBox="0 0 24 24" fill="#0E0E0E" color="#0E0E0E" stroke="none"><circle cx="12" cy="6.300" r="2.500"/><circle cx="4.800" cy="9" r="2.500"/><circle cx="19.200" cy="9" r="2.500"/><path d="M0.500 18v-2.600c0-2 1.900-3.200 4.100-3.200 1.300 0 2.300.4 3.100 1.100 1.100 1 2.500 1.700 4.300 1.700s3.200-.7 4.300-1.700c.8-.7 1.800-1.100 3.100-1.100 2.200 0 4.100 1.200 4.100 3.200V18h-9v-1.200c-.8.300-1.600.4-2.500.4s-1.700-.1-2.500-.4V18z"/><path d="M8.300 10.700c1 .9 2.300 1.400 3.700 1.400s2.700-.5 3.700-1.400c-.1 1.900-1.700 3.300-3.700 3.300s-3.600-1.400-3.700-3.300z"/></svg>
<svg class="b" style="left:133.75px;top:550.75px;" width="18.5" height="18.5" viewBox="0 0 24 24" fill="#0E0E0E" color="#0E0E0E" stroke="none"><path transform="translate(0,24) scale(0.025)" d="M280-80q-33 0-56.500-23.500T200-160q0-33 23.500-56.500T280-240q33 0 56.500 23.500T360-160q0 33-23.500 56.500T280-80Zm400 0q-33 0-56.500-23.500T600-160q0-33 23.500-56.500T680-240q33 0 56.500 23.500T760-160q0 33-23.500 56.500T680-80ZM246-720l96 200h280l110-200H246Zm-38-80h590q23 0 35 20.500t1 41.500L692-482q-11 20-29.500 31T622-440H324l-44 80h480v80H280q-45 0-68-39.500t-2-78.500l54-98-144-304H40v-80h130l38 80Z"/></svg>
<svg class="b" style="left:133.75px;top:593.75px;" width="18.5" height="18.5" viewBox="0 0 24 24" fill="#0E0E0E" color="#0E0E0E" stroke="none"><path d="M5 5h2v3h10V5h2v5h2V5c0-1.100-.9-2-2-2h-4.180C14.400 1.840 13.300 1 12 1s-2.400.84-2.820 2H5c-1.100 0-2 .9-2 2v14c0 1.100.9 2 2 2h5v-2H5V5zm7-2c.55 0 1 .45 1 1s-.45 1-1 1-1-.45-1-1 .45-1 1-1z"/><path d="M20.300 18.900c.4-.7.7-1.500.7-2.400 0-2.500-2-4.500-4.500-4.500S12 14 12 16.500s2 4.500 4.500 4.500c.9 0 1.700-.3 2.400-.7l2.700 2.700 1.400-1.400-2.700-2.700zm-3.800.1c-1.400 0-2.500-1.100-2.500-2.500s1.100-2.500 2.500-2.500 2.500 1.100 2.500 2.500-1.100 2.500-2.500 2.500z"/></svg>
<svg class="b" style="left:133.75px;top:637.25px;" width="18.5" height="18.5" viewBox="0 0 24 24" fill="#0E0E0E" color="#0E0E0E" stroke="none"><path transform="translate(0,24) scale(0.025)" d="M478-240q21 0 35.500-14.500T528-290q0-21-14.500-35.500T478-340q-21 0-35.500 14.500T428-290q0 21 14.500 35.500T478-240Zm-36-154h74q0-33 7.500-52t42.500-52q26-26 41-49.500t15-56.500q0-56-41-86t-97-30q-57 0-92.500 30T342-618l66 26q5-18 22.500-39t53.500-21q32 0 48 17.500t16 38.500q0 20-12 37.500T506-526q-44 39-54 59t-10 73Zm38 314q-83 0-156-31.500T197-197q-54-54-85.500-127T80-480q0-83 31.500-156T197-763q54-54 127-85.500T480-880q83 0 156 31.500T763-763q54 54 85.500 127T880-480q0 83-31.500 156T763-197q-54 54-127 85.500T480-80Zm0-80q134 0 227-93t93-227q0-134-93-227t-227-93q-134 0-227 93t-93 227q0 134 93 227t227 93Z"/></svg>
<svg class="b" style="left:133.75px;top:680.25px;" width="18.5" height="18.5" viewBox="0 0 24 24" fill="#0E0E0E" color="#0E0E0E" stroke="none"><path d="M12 1L3 5v6c0 5.550 3.840 10.740 9 12 5.160-1.260 9-6.450 9-12V5l-9-4zm7 10c0 4.520-2.980 8.690-7 9.930-4.020-1.240-7-5.410-7-9.930V6.300l7-3.110 7 3.110V11zm-11.590.59L6 13l4 4 8-8-1.410-1.420L10 14.170z"/></svg>
<svg class="b" style="left:133.75px;top:723.25px;" width="18.5" height="18.5" viewBox="0 0 24 24" fill="#0E0E0E" color="#0E0E0E" stroke="none"><path d="M9 13.750c-2.340 0-7 1.170-7 3.500V19h14v-1.750c0-2.330-4.660-3.500-7-3.500zM4.340 17c.84-.58 2.870-1.250 4.660-1.250s3.820.67 4.660 1.250H4.340zM9 12c1.930 0 3.500-1.570 3.500-3.500S10.930 5 9 5 5.500 6.570 5.500 8.500 7.070 12 9 12zm0-5c.83 0 1.500.67 1.500 1.500S9.830 10 9 10s-1.500-.67-1.500-1.500S8.170 7 9 7zm7.040 6.810c1.160.84 1.960 1.960 1.960 3.440V19h4v-1.750c0-2.020-3.500-3.170-5.960-3.440zM15 12c1.930 0 3.500-1.570 3.500-3.500S16.930 5 15 5c-.54 0-1.040.13-1.500.35.63.89 1 1.980 1 3.150s-.37 2.260-1 3.150c.46.220.96.350 1.500.350z"/></svg>
<svg class="b" style="left:133.75px;top:766.75px;" width="18.5" height="18.5" viewBox="0 0 24 24" fill="#F2660F" color="#F2660F" stroke="none"><g fill="none" stroke="currentColor" stroke-width="1.900" stroke-linejoin="round" stroke-linecap="round"><path d="M21.200 2.800c-5.600-.2-10.200 3.200-12.400 8.400l4 4c5.200-2.200 8.600-6.800 8.400-12.400z"/><path d="M9.300 10.200l-3.600-.3-2.500 3.300 4.300.8"/><path d="M13.800 14.700l.3 3.600-3.300 2.500-.8-4.300"/><path d="M6.300 16.200c-1.900.3-2.900 2-3.100 4.600 2.600-.2 4.300-1.200 4.600-3.100"/></g><circle cx="15.300" cy="8.700" r="1.700"/></svg>
<svg class="b" style="left:133.75px;top:810.25px;" width="18.5" height="18.5" viewBox="0 0 24 24" fill="#0E0E0E" color="#0E0E0E" stroke="none"><path d="M4 13c1.100 0 2-.9 2-2s-.9-2-2-2-2 .9-2 2 .9 2 2 2zm1.130 1.100c-.37-.06-.74-.1-1.130-.1-.99 0-1.930.21-2.780.58C.48 14.900 0 15.620 0 16.430V18h4.500v-1.610c0-.83.23-1.610.63-2.290zM20 13c1.100 0 2-.9 2-2s-.9-2-2-2-2 .9-2 2 .9 2 2 2zm4 3.430c0-.81-.48-1.530-1.220-1.850-.85-.37-1.790-.58-2.780-.58-.39 0-.76.04-1.130.1.4.68.63 1.460.63 2.290V18H24v-1.570zm-7.760-2.780c-1.170-.52-2.610-.9-4.240-.9-1.630 0-3.070.39-4.240.9C6.680 14.130 6 15.210 6 16.390V18h12v-1.610c0-1.180-.68-2.260-1.760-2.740zM8.070 16c.09-.23.13-.39.91-.69.97-.38 1.990-.56 3.020-.56s2.050.18 3.020.56c.77.3.81.46.91.69H8.070zM12 8c.55 0 1 .45 1 1s-.45 1-1 1-1-.45-1-1 .45-1 1-1m0-2c-1.660 0-3 1.340-3 3s1.340 3 3 3 3-1.340 3-3-1.340-3-3-3z"/></svg>
<svg class="b" style="left:133.75px;top:853.25px;" width="18.5" height="18.5" viewBox="0 0 24 24" fill="#0E0E0E" color="#0E0E0E" stroke="none"><path transform="translate(0,24) scale(0.025)" d="m612-292 56-56-148-148v-184h-80v216l172 172ZM480-80q-83 0-156-31.500T197-197q-54-54-85.500-127T80-480q0-83 31.500-156T197-763q54-54 127-85.500T480-880q83 0 156 31.500T763-763q54 54 85.500 127T880-480q0 83-31.500 156T763-197q-54 54-127 85.500T480-80Zm0-80q133 0 226.500-93.500T800-480q0-133-93.500-226.500T480-800q-133 0-226.500 93.500T160-480q0 133 93.500 226.500T480-160Z"/></svg>
<svg class="b" style="left:133.75px;top:896.25px;" width="18.5" height="18.5" viewBox="0 0 24 24" fill="#0E0E0E" color="#0E0E0E" stroke="none"><path transform="translate(0,24) scale(0.025)" d="m136-240-56-56 296-298 160 160 208-206H640v-80h240v240h-80v-104L536-320 376-480 136-240Z"/></svg>
<svg class="b" style="left:133.75px;top:939.25px;" width="18.5" height="18.5" viewBox="0 0 24 24" fill="#0E0E0E" color="#0E0E0E" stroke="none"><g fill="none" stroke="currentColor" stroke-width="1.800" stroke-linejoin="round"><path d="M13.400 14.800l1.800-1.800 5.600 5.600-1.800 1.800z"/><path d="M10.600 14.800l-1.800-1.800-5.600 5.600 1.800 1.800z"/></g><path d="M3.200 3.800l1.600-1.600 3.700 2.500.2 1.800 5.200 5.200-1.500 1.500-5.200-5.200-1.800-.2z"/><path d="M14.600 2.600l2.200-.6 5.200 5.200-2 2-1.300-1.300-1.200.3-5.600 5.600-1.500-1.500 5.600-5.600-.9-1.900z"/></svg>
<svg class="b" style="left:133.75px;top:982.75px;" width="18.5" height="18.5" viewBox="0 0 24 24" fill="#0E0E0E" color="#0E0E0E" stroke="none"><path d="M9.76 5.47 L10.17 2.98 L13.83 2.98 L14.24 5.47 L16.54 6.80 L18.89 5.91 L20.72 9.07 L18.77 10.67 L18.77 13.33 L20.72 14.93 L18.89 18.09 L16.54 17.20 L14.24 18.53 L13.83 21.02 L10.17 21.02 L9.76 18.53 L7.46 17.20 L5.11 18.09 L3.28 14.93 L5.23 13.33 L5.23 10.67 L3.28 9.07 L5.11 5.91 L7.46 6.80Z" fill="none" stroke="currentColor" stroke-width="2" stroke-linejoin="round"/><circle cx="12" cy="12" r="3"/></svg>
<svg class="b" style="left:133.75px;top:1025.75px;" width="18.5" height="18.5" viewBox="0 0 24 24" fill="#0E0E0E" color="#0E0E0E" stroke="none"><g fill="none" stroke="currentColor" stroke-width="2"><path d="M6.500 8.500V4.200a1.700 1.700 0 0 1 1.700-1.700h7.600a1.700 1.700 0 0 1 1.700 1.700v4.300"/><path d="M6.500 15.500v4.300a1.700 1.700 0 0 0 1.700 1.700h7.600a1.700 1.700 0 0 0 1.700-1.700v-4.300"/><path d="M6.500 5.800h11M6.500 18.200h11"/><path d="M10 9l-3 3 3 3M14 9l3 3-3 3" stroke-width="1.900"/></g></svg>
<div class="b" style="left:153.50px;top:884.50px;width:18.80px;height:20.30px;background:#FEE7D7;border-radius:5px;box-shadow:0 0 2px #FEE7D7,0 2px 8px rgba(0,0,0,.07)"></div>
<span class="t" style="left:159.12px;top:885px;font-size:12.5px;font-weight:400;color:#F07A30;-webkit-text-stroke-width:0.45px;-webkit-text-stroke:0;">1</span></div>
</body></html>
